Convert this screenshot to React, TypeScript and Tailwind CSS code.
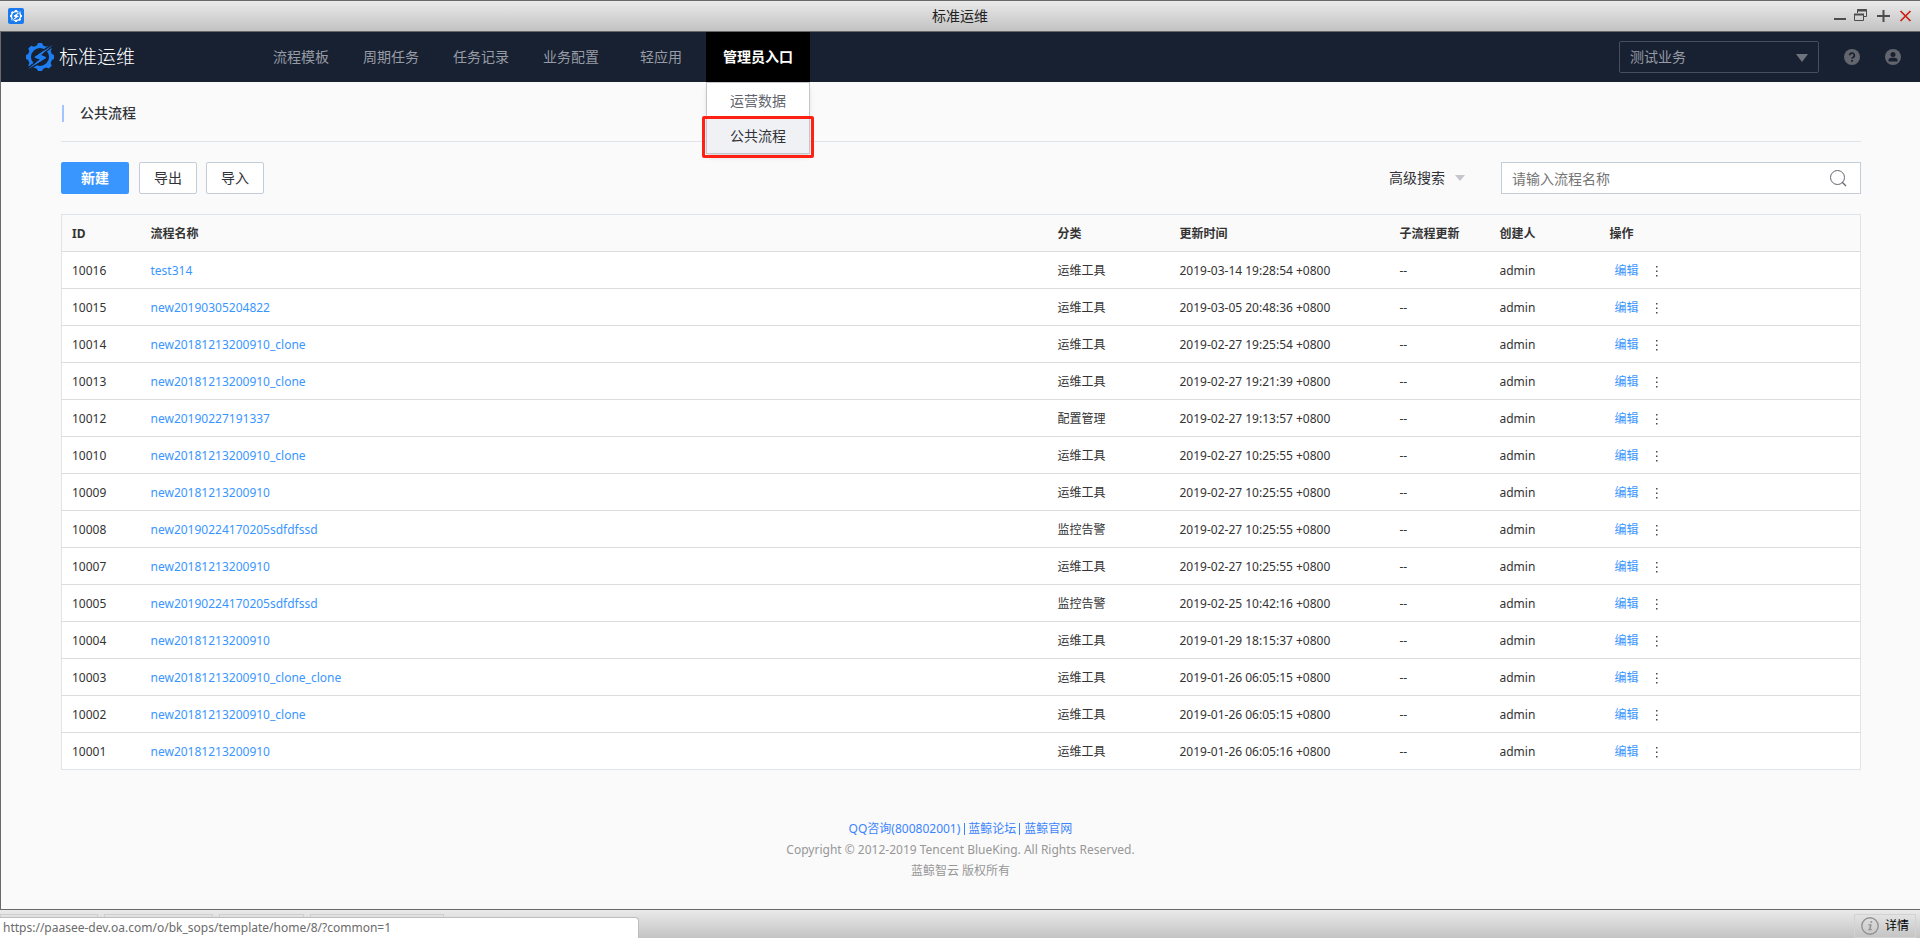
import React from "react";

const NAV_ITEMS = ["流程模板", "周期任务", "任务记录", "业务配置", "轻应用"];

const ROWS = [
  { id: "10016", name: "test314", category: "运维工具", time: "2019-03-14 19:28:54 +0800" },
  { id: "10015", name: "new20190305204822", category: "运维工具", time: "2019-03-05 20:48:36 +0800" },
  { id: "10014", name: "new20181213200910_clone", category: "运维工具", time: "2019-02-27 19:25:54 +0800" },
  { id: "10013", name: "new20181213200910_clone", category: "运维工具", time: "2019-02-27 19:21:39 +0800" },
  { id: "10012", name: "new20190227191337", category: "配置管理", time: "2019-02-27 19:13:57 +0800" },
  { id: "10010", name: "new20181213200910_clone", category: "运维工具", time: "2019-02-27 10:25:55 +0800" },
  { id: "10009", name: "new20181213200910", category: "运维工具", time: "2019-02-27 10:25:55 +0800" },
  { id: "10008", name: "new20190224170205sdfdfssd", category: "监控告警", time: "2019-02-27 10:25:55 +0800" },
  { id: "10007", name: "new20181213200910", category: "运维工具", time: "2019-02-27 10:25:55 +0800" },
  { id: "10005", name: "new20190224170205sdfdfssd", category: "监控告警", time: "2019-02-25 10:42:16 +0800" },
  { id: "10004", name: "new20181213200910", category: "运维工具", time: "2019-01-29 18:15:37 +0800" },
  { id: "10003", name: "new20181213200910_clone_clone", category: "运维工具", time: "2019-01-26 06:05:15 +0800" },
  { id: "10002", name: "new20181213200910_clone", category: "运维工具", time: "2019-01-26 06:05:15 +0800" },
  { id: "10001", name: "new20181213200910", category: "运维工具", time: "2019-01-26 06:05:16 +0800" },
];

function GearMark({ className, ground }: { className: string; ground: string }) {
  return (
    <svg viewBox="0 0 28 28" className={className} aria-hidden="true">
      <path
        fill="currentColor"
        fillRule="evenodd"
        d="M10.800 2.600 12 0h4l1.200 2.600 3 1.200 2.700-1 2.800 2.800-1 2.700 1.200 2.700L28 12v4l-2.100 1-1.200 3 1 2.700-2.800 2.800-2.700-1-3 1.200L16 28h-4l-1.200-2.300-3-1.200-2.700 1-2.800-2.800 1-2.700-1.200-3L0 16v-4l2.100-1 1.200-2.700-1-2.700 2.800-2.800 2.700 1zM14 5a9 9 0 1 0 0 18 9 9 0 0 0 0-18z"
      />
      <path
        d="M27.500 1.500 8.500 14.200l5.800 2.100L1.500 26.500 20 14.800l-5.700-2.600z"
        fill="currentColor"
        stroke={ground}
        strokeWidth="3"
        paintOrder="stroke"
      />
      <path d="M26.800 2.200 8.500 14.200l5.800 2.200L2 26l18-11.400-5.600-2.600z" fill="currentColor" />
      <path d="M18 8 9 14.200l5.600 2-4.600 4.300L20 14.600l-5.600-2.400z" fill="none" stroke="currentColor" strokeWidth="1" />
    </svg>
  );
}

function TitleBar() {
  return (
    <header className="flex h-8 items-center border-y border-[#696969] bg-linear-to-b from-[#eaeaea] to-[#c2c2c2] px-2">
      <div className="flex flex-1">
        <span className="flex size-4 items-center justify-center rounded-xs bg-[#1a7af0] text-white">
          <GearMark className="size-3" ground="#1a7af0" />
        </span>
      </div>
      <h1 className="text-sm text-[#222]">标准运维</h1>
      <div className="flex flex-1 items-center justify-end gap-2 text-[#4c4c4c]">
        <button type="button" aria-label="最小化">
          <svg viewBox="0 0 14 14" className="size-3.5">
            <path d="M2 10h12" stroke="currentColor" strokeWidth="2" />
          </svg>
        </button>
        <button type="button" aria-label="还原">
          <svg viewBox="0 0 14 14" className="size-3.5" fill="none" stroke="currentColor">
            <path d="M3.500 4V.500h9v7h-3" />
            <path d="M3 1.500h10M0 5.500h10" strokeWidth="2" />
            <path d="M.500 5v6.500h9V5" />
          </svg>
        </button>
        <button type="button" aria-label="最大化">
          <svg viewBox="0 0 14 14" className="size-3.5">
            <path d="M1 7h13M7.500 1v12" stroke="currentColor" strokeWidth="2" />
          </svg>
        </button>
        <button type="button" aria-label="关闭" className="text-[#cc1f14]">
          <svg viewBox="0 0 14 14" className="size-3.5">
            <path d="m2.500 2 10 10M12.500 2l-10 10" stroke="currentColor" strokeWidth="1.700" />
          </svg>
        </button>
      </div>
    </header>
  );
}

function NavBar() {
  return (
    <div className="flex h-[50px] items-center bg-[#182131] text-sm text-[#979ba5]">
      <a href="#home" className="flex w-[255px] shrink-0 items-center gap-[5px] pl-[25px] text-white">
        <GearMark className="size-7 text-[#1e7df0]" ground="#182131" />
        <span className="text-[19px] leading-7 font-light">标准运维</span>
      </a>
      <nav className="flex h-full">
        {NAV_ITEMS.map((item) => (
          <a key={item} href="#nav" className="flex min-w-[90px] items-center justify-center px-[17px]">
            {item}
          </a>
        ))}
        <div className="relative h-full">
          <a href="#admin" className="flex h-full items-center bg-black px-[17px] font-bold text-white">
            管理员入口
          </a>
          <div className="absolute inset-x-0 top-full z-10 flex flex-col border border-[#c4c6cc] bg-white text-center leading-[35px] text-[#63656e] shadow-md">
            <a href="#data">运营数据</a>
            <a href="#common" className="bg-[#eff1f5] text-[#313238]">
              公共流程
            </a>
            <span className="pointer-events-none absolute -inset-x-[5px] top-[33px] -bottom-[5px] rounded-xs border-3 border-[#ff2214]" />
          </div>
        </div>
      </nav>
      <div className="ml-auto flex items-center pr-[19px]">
        <div className="relative w-[200px]">
          <select
            aria-label="业务"
            className="h-8 w-full appearance-none rounded-xs border border-[#434e60] bg-transparent px-[10px] text-sm text-[#979ba5]"
          >
            <option>测试业务</option>
          </select>
          <svg viewBox="0 0 12 8" className="pointer-events-none absolute top-[13px] right-[11px] h-2 w-3" aria-hidden="true">
            <path d="M0 0h12L6 8z" fill="#6f737d" />
          </svg>
        </div>
        <button type="button" aria-label="帮助" className="ml-[25px]">
          <svg viewBox="0 0 16 16" className="size-4">
            <circle cx="8" cy="8" r="8" fill="#63656e" />
            <path d="M5.700 6.300a2.300 2.300 0 1 1 3.300 2.100c-.700.350-1 .700-1 1.400" fill="none" stroke="#182131" strokeWidth="1.700" />
            <path d="M7.100 11h1.800v1.700H7.100z" fill="#182131" />
          </svg>
        </button>
        <button type="button" aria-label="用户" className="ml-[25px]">
          <svg viewBox="0 0 16 16" className="size-4">
            <circle cx="8" cy="8" r="8" fill="#63656e" />
            <circle cx="8" cy="5.600" r="2.500" fill="#182131" />
            <path d="M3.500 12.500V11c0-1.500 1.500-2.300 3-2.300h3c1.500 0 3 .800 3 2.300v1.500z" fill="#182131" />
          </svg>
        </button>
      </div>
    </div>
  );
}

function Toolbar() {
  return (
    <div className="mt-5 flex items-center text-sm text-[#313238]">
      <button type="button" className="h-8 w-[68px] rounded-xs bg-[#3a96ff] font-bold text-white">
        新建
      </button>
      <button type="button" className="ml-[10px] h-8 w-[58px] rounded-xs border border-[#c3cdd7] bg-white">
        导出
      </button>
      <button type="button" className="ml-[9px] h-8 w-[58px] rounded-xs border border-[#c3cdd7] bg-white">
        导入
      </button>
      <button type="button" className="ml-auto flex items-center gap-[10px]">
        高级搜索
        <svg viewBox="0 0 10 6" className="h-1.5 w-2.5" aria-hidden="true">
          <path d="M0 0h10L5 6z" fill="#c4c6cc" />
        </svg>
      </button>
      <div className="relative ml-9 w-[360px]">
        <input
          type="text"
          aria-label="流程名称"
          placeholder="请输入流程名称"
          className="h-8 w-full border border-[#c3cdd7] bg-white pr-10 pl-[10px] placeholder:text-[#757575]"
        />
        <svg viewBox="0 0 18 18" className="pointer-events-none absolute top-[7px] right-[14px] size-[18px]" fill="none" stroke="#63656e" aria-hidden="true">
          <circle cx="8.500" cy="8.500" r="7" />
          <path d="m13 13 4 4" strokeWidth="1.300" />
        </svg>
      </div>
    </div>
  );
}

function FlowTable() {
  return (
    <table className="mt-5 w-full table-fixed border-collapse border border-[#dde4eb] bg-white text-left text-xs text-[#333]">
      <colgroup>
        <col className="w-[79px]" />
        <col />
        <col className="w-[122px]" />
        <col className="w-[220px]" />
        <col className="w-[100px]" />
        <col className="w-[110px]" />
        <col className="w-[261px]" />
      </colgroup>
      <thead>
        <tr className="h-[37px] bg-[#fafafa]">
          {["ID", "流程名称", "分类", "更新时间", "子流程更新", "创建人", "操作"].map((title) => (
            <th key={title} className="px-[10px] pt-0.5 font-bold">
              {title}
            </th>
          ))}
        </tr>
      </thead>
      <tbody>
        {ROWS.map((row) => (
          <tr key={row.id} className="h-[37px] border-t border-[#dddddf]">
            <td className="px-[10px] pt-0.5">{row.id}</td>
            <td className="px-[10px] pt-0.5">
              <a href="#flow" className="text-[#3a96ff]">
                {row.name}
              </a>
            </td>
            <td className="px-[10px] pt-0.5">{row.category}</td>
            <td className="px-[10px] pt-0.5">{row.time}</td>
            <td className="px-[10px] pt-0.5">--</td>
            <td className="px-[10px] pt-0.5">admin</td>
            <td className="px-[10px] pt-0.5">
              <div className="flex items-center gap-4 pl-[5px]">
                <a href="#edit" className="text-[#3a96ff]">
                  编辑
                </a>
                <button type="button" aria-label="更多">
                  <svg viewBox="0 0 4 12" className="h-3 w-1" fill="#4a4a4f">
                    <path d="M1 1h1.500v1.500H1zM1 5.500h1.500V7H1zM1 10h1.500v1.500H1z" />
                  </svg>
                </button>
              </div>
            </td>
          </tr>
        ))}
      </tbody>
    </table>
  );
}

function PageFooter() {
  return (
    <footer className="mt-12 pb-7 text-center text-xs leading-[21px] text-[#979797]">
      <p className="flex items-center justify-center gap-1 text-[#3a84ff]">
        <a href="#qq">QQ咨询(800802001)</a>
        <a href="#forum" className="border-x border-[#3a84ff] px-[3px] leading-3">
          蓝鲸论坛
        </a>
        <a href="#site">蓝鲸官网</a>
      </p>
      <p>Copyright © 2012-2019 Tencent BlueKing. All Rights Reserved.</p>
      <p>蓝鲸智云 版权所有</p>
    </footer>
  );
}

function TaskTab({ className }: { className: string }) {
  return (
    <div className={`h-6 overflow-hidden border border-[#cfcfcf] ${className}`}>
      <span className="mt-[2px] ml-2 block size-4 rounded-full border-2 border-[#8f8f8f]" />
    </div>
  );
}

function StatusBar() {
  return (
    <div className="relative flex h-[30px] items-start border-t border-[#696969] bg-linear-to-b from-[#eaeaea] to-[#c2c2c2] pt-1 pr-1">
      <div className="flex gap-1.5">
        <TaskTab className="w-[98px]" />
        <TaskTab className="w-[109px]" />
        <TaskTab className="w-[85px]" />
        <TaskTab className="w-[134px]" />
      </div>
      <button type="button" className="ml-auto flex h-6 items-center gap-1.5 border border-[#d2d2d2] px-1.5 text-xs text-black">
        <svg viewBox="0 0 18 18" className="size-[18px]" aria-hidden="true">
          <circle cx="9" cy="9" r="8.200" fill="none" stroke="#929292" strokeWidth="1.400" />
          <path d="M9.600 4h1.800l-.300 1.700H9.300zM7.500 7.200h3.200l-1 4.800h1.100l-.200 1.200H7.200l.200-1.200h.700l.700-3.600H7.300z" fill="#929292" />
        </svg>
        详情
      </button>
      <div className="absolute bottom-0 left-0 h-[22px] w-[639px] rounded-tr-sm border-t border-r border-[#bdbdbd] bg-white pl-[3px] text-xs leading-5 text-[#6b6b6b]">
        https://paasee-dev.oa.com/o/bk_sops/template/home/8/?common=1
      </div>
    </div>
  );
}

export default function App() {
  return (
    <div className="flex min-h-screen flex-col bg-[#fafafa] font-['Noto_Sans','Noto_Sans_CJK_SC',sans-serif]">
      <TitleBar />
      <div className="flex flex-1 flex-col border-l border-[#696969]">
        <NavBar />
        <main className="px-[60px] pr-[59px]">
          <div className="flex h-[60px] items-center border-b border-[#dde4eb] pt-[3px]">
            <h2 className="ml-px flex h-[17px] items-center border-l-2 border-[#a3c5fd] pl-4 text-sm font-medium text-[#313238]">
              公共流程
            </h2>
          </div>
          <Toolbar />
          <FlowTable />
        </main>
        <PageFooter />
      </div>
      <StatusBar />
    </div>
  );
}
